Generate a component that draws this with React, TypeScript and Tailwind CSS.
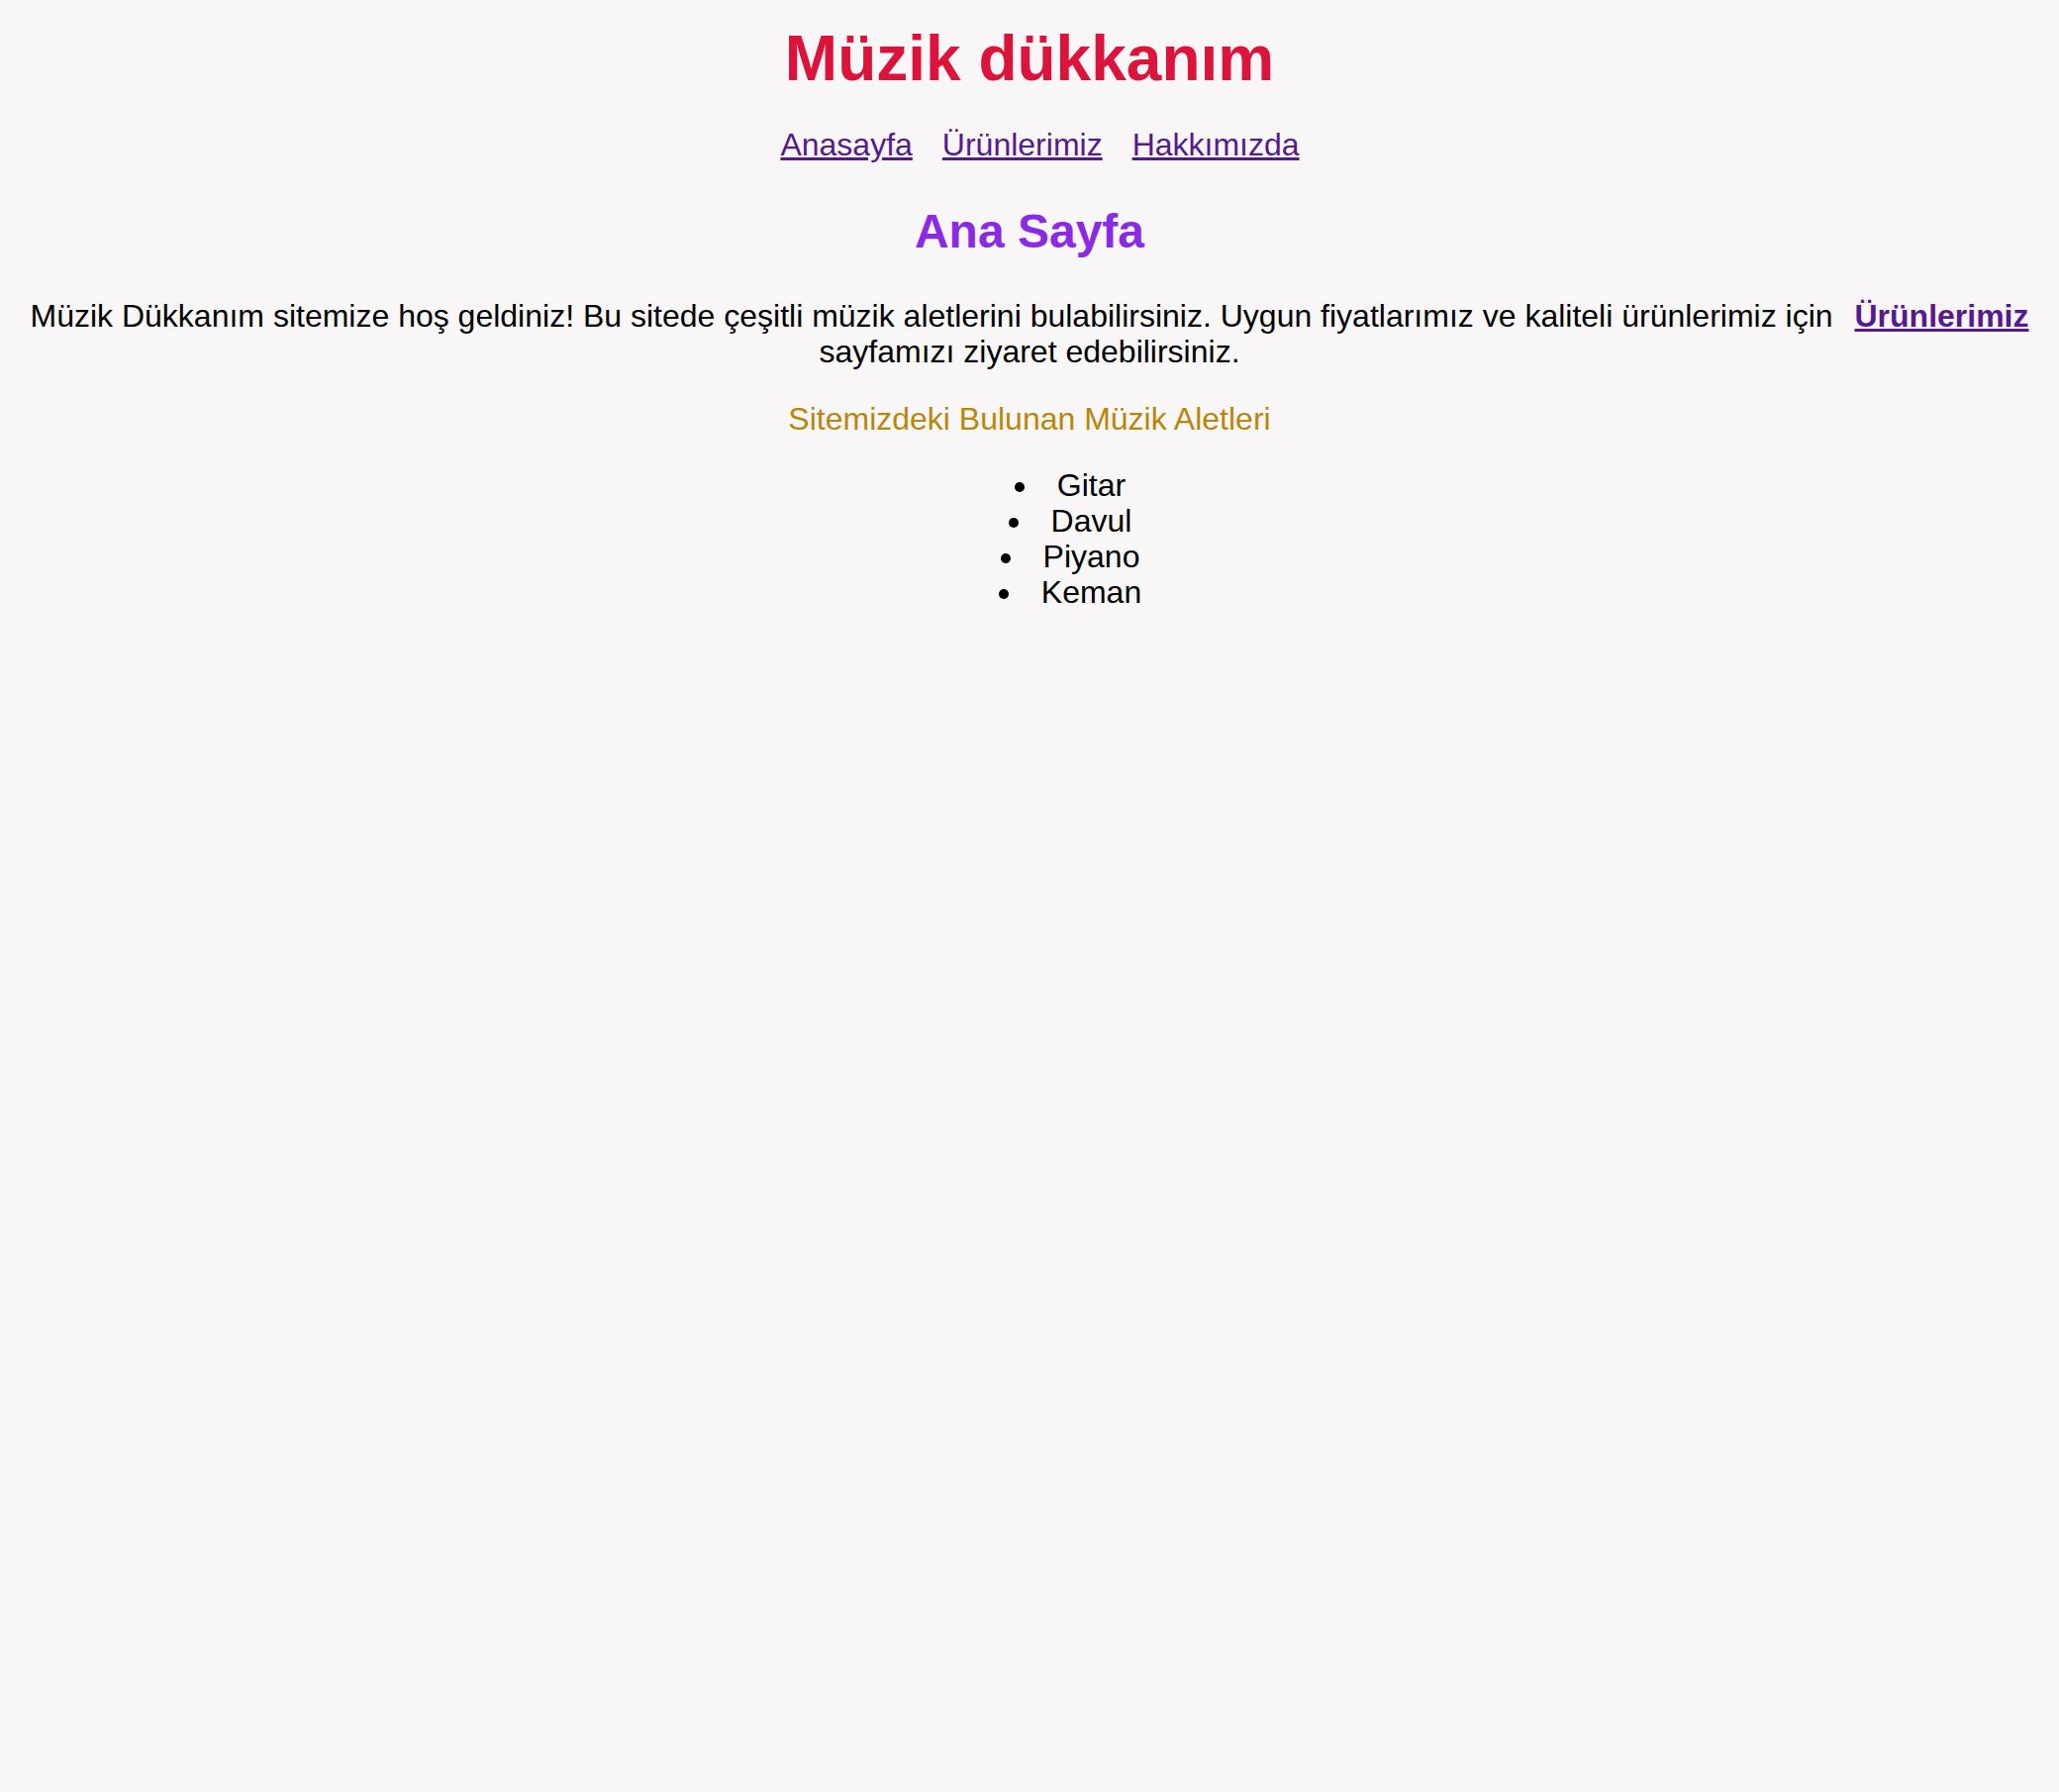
export default function App() {
  return (
    <main className="min-h-screen bg-[#f8f6f7] px-2 pt-[22px] text-center font-['Liberation_Sans',Arial,sans-serif] text-black">
      {/* başlık */}
      <h1 className="text-[64px] leading-[74px] font-bold text-[#dc143c]">Müzik dükkanım</h1>

      {/* menü */}
      <nav className="mt-8 flex justify-center gap-[30px] pl-[21px] text-[32px] leading-[36px]">
        <a href="#" className="text-[#551a8b] underline">Anasayfa</a>
        <a href="#" className="text-[#551a8b] underline">Ürünlerimiz</a>
        <a href="#" className="text-[#551a8b] underline">Hakkımızda</a>
      </nav>

      <h2 className="mt-[42px] text-[48px] leading-[55px] font-bold text-[#8a2be2]">Ana Sayfa</h2>

      <p className="mt-[40px] text-[32px] leading-[36px]">
        Müzik Dükkanım sitemize hoş geldiniz! Bu sitede çeşitli müzik aletlerini bulabilirsiniz. Uygun fiyatlarımız ve kaliteli ürünlerimiz için{" "}
        <a href="#" className="ml-[13px] font-bold text-[#551a8b] underline">Ürünlerimiz</a> sayfamızı ziyaret edebilirsiniz.
      </p>

      <p className="mt-[32px] text-[32px] leading-[36px] text-[#b8860b]">Sitemizdeki Bulunan Müzik Aletleri</p>

      <ul className="mt-[31px] list-inside list-disc pl-[82px] text-[32px] leading-[36px]">
        {["Gitar", "Davul", "Piyano", "Keman"].map((item) => (
          <li key={item}>{item}</li>
        ))}
      </ul>
    </main>
  );
}
